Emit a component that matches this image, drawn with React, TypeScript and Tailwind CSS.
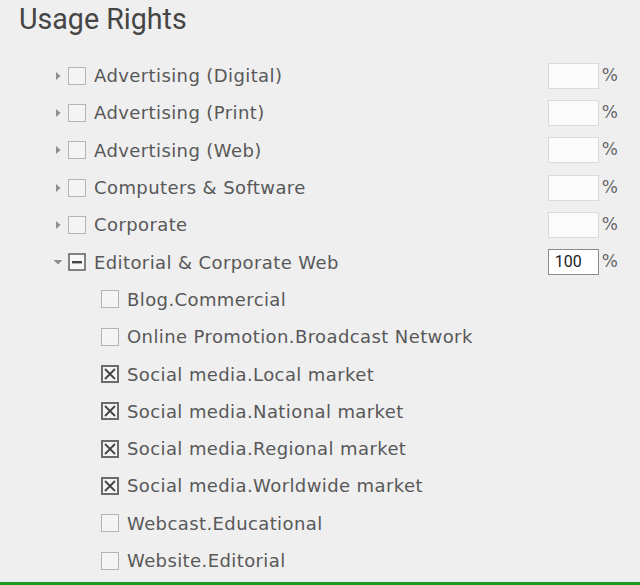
import React from 'react';

type Row = { label: string; level: 0 | 1; state: 'empty' | 'checked' | 'partial'; arrow?: 'right' | 'down'; pct?: string };

const rows: Row[] = [
  { label: 'Advertising (Digital)', level: 0, state: 'empty', arrow: 'right', pct: '' },
  { label: 'Advertising (Print)', level: 0, state: 'empty', arrow: 'right', pct: '' },
  { label: 'Advertising (Web)', level: 0, state: 'empty', arrow: 'right', pct: '' },
  { label: 'Computers & Software', level: 0, state: 'empty', arrow: 'right', pct: '' },
  { label: 'Corporate', level: 0, state: 'empty', arrow: 'right', pct: '' },
  { label: 'Editorial & Corporate Web', level: 0, state: 'partial', arrow: 'down', pct: '100' },
  { label: 'Blog.Commercial', level: 1, state: 'empty' },
  { label: 'Online Promotion.Broadcast Network', level: 1, state: 'empty' },
  { label: 'Social media.Local market', level: 1, state: 'checked' },
  { label: 'Social media.National market', level: 1, state: 'checked' },
  { label: 'Social media.Regional market', level: 1, state: 'checked' },
  { label: 'Social media.Worldwide market', level: 1, state: 'checked' },
  { label: 'Webcast.Educational', level: 1, state: 'empty' },
  { label: 'Website.Editorial', level: 1, state: 'empty' },
];

const Box = ({ state }: { state: Row['state'] }) => {
  if (state === 'checked') {
    return (
      <svg width="18" height="18" viewBox="0 0 18 18" className="shrink-0">
        <rect x="1" y="1" width="16" height="16" fill="#f4f4f4" stroke="#6a6a6a" strokeWidth="2" />
        <path d="M4 4 L14 14 M14 4 L4 14" stroke="#444" strokeWidth="1.8" />
      </svg>
    );
  }
  if (state === 'partial') {
    return (
      <svg width="18" height="18" viewBox="0 0 18 18" className="shrink-0">
        <rect x="1" y="1" width="16" height="16" fill="#f7f7f7" stroke="#666" strokeWidth="1.6" />
        <rect x="4" y="8" width="10" height="2.4" fill="#444" />
      </svg>
    );
  }
  return (
    <svg width="18" height="18" viewBox="0 0 18 18" className="shrink-0">
      <rect x="0.5" y="0.5" width="17" height="17" fill="#f4f4f5" stroke="#b4b4b4" strokeWidth="1" />
    </svg>
  );
};

const Arrow = ({ dir }: { dir: 'right' | 'down' }) => (
  <svg width="10" height="10" viewBox="0 0 10 10" className="shrink-0">
    {dir === 'right' ? <path d="M3 1 L7.5 5 L3 9 Z" fill="#8e8e8e" /> : <path d="M0.5 3 L9.5 3 L5 7.5 Z" fill="#8e8e8e" />}
  </svg>
);

export default function App() {
  return (
    <div className="w-[640px] h-[585px] bg-[#efeff0] overflow-hidden flex flex-col border-b-[3px] border-[#1c9a1c]" style={{ fontFamily: '"DejaVu Sans", sans-serif' }}>
      <h1 className="pl-[19px] h-[57px] text-[28.6px] leading-[38px] text-[#454545]" style={{ fontFamily: 'Roboto, sans-serif' }}>
        Usage Rights
      </h1>
      <div className="flex flex-col">
        {rows.map((r) => (
          <div key={r.label} className="h-[37.3px] flex items-center pr-[22px]">
            {r.level === 0 ? (
              <div className="flex items-center pl-[53px]">
                <Arrow dir={r.arrow!} />
                <div className="ml-[5px]"><Box state={r.state} /></div>
                <span className="ml-[8px] text-[18px] tracking-[0.4px] text-[#585858] whitespace-nowrap">{r.label}</span>
              </div>
            ) : (
              <div className="flex items-center pl-[101px]">
                <Box state={r.state} />
                <span className="ml-[8px] text-[18px] tracking-[0.4px] text-[#585858] whitespace-nowrap">{r.label}</span>
              </div>
            )}
            {r.pct !== undefined && (
              <div className="ml-auto flex items-center">
                <div
                  className={
                    r.pct
                      ? 'w-[51px] h-[26px] bg-white border border-[#8a8a8a] text-[16px] text-[#222] pl-[6px] flex items-center'
                      : 'w-[51px] h-[26px] bg-[#fbfbfb] border border-[#dadada]'
                  }
                  style={{ fontFamily: 'Roboto, sans-serif' }}
                >
                  {r.pct}
                </div>
                <span className="ml-[3px] text-[17px] text-[#666]">%</span>
              </div>
            )}
          </div>
        ))}
      </div>
    </div>
  );
}
